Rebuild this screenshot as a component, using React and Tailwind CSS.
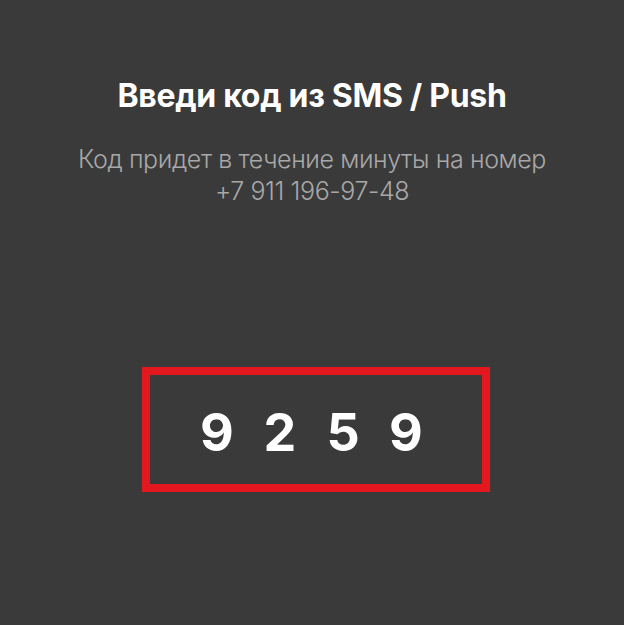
export default function App() {
  return (
    <div className="w-[624px] h-[625px] bg-[#3a3a3a] flex flex-col items-center" style={{ fontFamily: 'Inter, "Noto Sans", sans-serif' }}>
      <h1 className="mt-[78px] text-[32px] leading-[36px] font-bold text-white tracking-[-0.3px]">Введи код из SMS / Push</h1>
      <p className="mt-[29px] text-[25px] leading-[32px] font-light text-[#a8a8a8] text-center tracking-[-0.4px]">
        Код придет в течение минуты на номер<br />+7 911 196-97-48
      </p>
      <div className="mt-[160px] ml-[8px] w-[348px] h-[125px] border-[8px] border-[#e3181f] flex items-center pl-[49px] pt-[7px] gap-[27px]">
        {["9", "2", "5", "9"].map((d, i) => (
          <span key={i} className="w-[36px] text-center text-[52px] font-bold text-white leading-none">{d}</span>
        ))}
      </div>
    </div>
  );
}
